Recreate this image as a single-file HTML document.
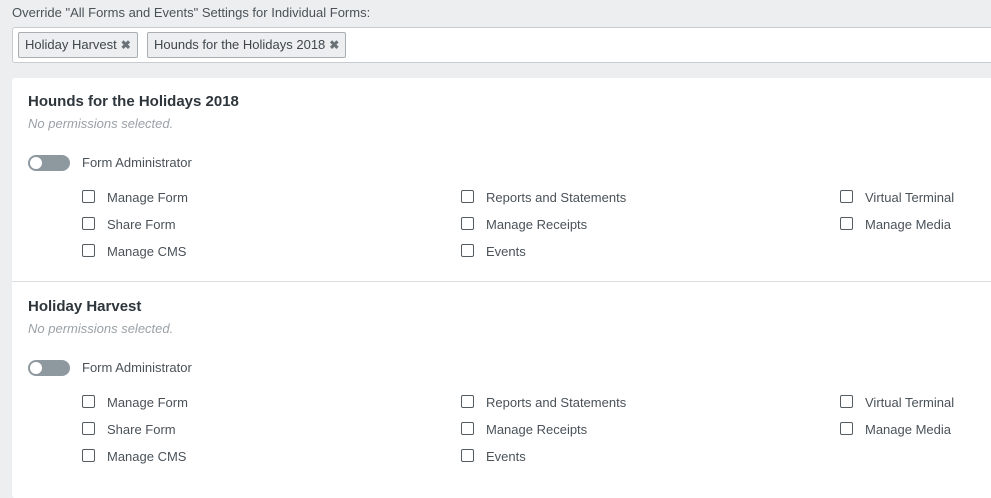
<!DOCTYPE html><html><head><style>
body{margin:0;width:991px;height:484px;background:#eceeef;font-family:"Liberation Sans",sans-serif;position:relative;overflow:hidden;color:#4a5258}
.a{position:absolute;white-space:nowrap}
.lbl{font-size:13px;color:#4a5258}
.inp{position:absolute;left:12px;top:27px;width:990px;height:34px;background:#fff;border:1px solid #c8ccd0;border-radius:3px}
.tag{position:absolute;top:4px;height:24px;line-height:24px;background:#eceeef;border:1px solid #a9aeb2;border-radius:2px;font-size:13px;padding:0 6px;color:#3f474d}
.tag b{color:#6b7378;margin-left:4px;font-size:12px}
.card{position:absolute;left:12px;top:78px;width:990px;height:420px;background:#fff;border-radius:3px}
.sep{position:absolute;left:12px;top:281px;width:990px;height:1px;background:#dcdfe1}
.h{font-size:15px;font-weight:bold;color:#2e363c}
.sub{font-size:13px;font-style:italic;color:#9aa1a6}
.tog{position:absolute;width:42px;height:16px;border-radius:8px;background:#8e989f}
.tog::after{content:"";position:absolute;left:2px;top:2px;width:12px;height:12px;border-radius:50%;background:#fff}
.cb{position:absolute;width:11px;height:11px;border:1px solid #555c61;border-radius:2px;background:#fff}
</style></head><body>
<div class="a lbl" style="left:12px;top:5px">Override "All Forms and Events" Settings for Individual Forms:</div>
<div class="inp">
<div class="tag" style="left:5px">Holiday Harvest<b>✖</b></div>
<div class="tag" style="left:134px">Hounds for the Holidays 2018<b>✖</b></div>
</div>
<div class="card"></div>
<div class="sep"></div>
<div id="s1"></div>
<script>
const titles=["Hounds for the Holidays 2018","Holiday Harvest"];
const cols=[[82,107,["Manage Form","Share Form","Manage CMS"]],[461,486,["Reports and Statements","Manage Receipts","Events"]],[840,865,["Virtual Terminal","Manage Media"]]];
let h="";
titles.forEach((t,i)=>{const o=i*205;
h+=`<div class="a h" style="left:28px;top:${93+o}px">${t}</div>`;
h+=`<div class="a sub" style="left:28px;top:116+${0}px;top:${116+o}px">No permissions selected.</div>`;
h+=`<div class="tog" style="left:28px;top:${155+o}px"></div>`;
h+=`<div class="a lbl" style="left:82px;top:${155+o}px">Form Administrator</div>`;
cols.forEach(c=>c[2].forEach((l,j)=>{const y=190+o+j*27;
h+=`<div class="cb" style="left:${c[0]}px;top:${y}px"></div><div class="a lbl" style="left:${c[1]}px;top:${y+0}px">${l}</div>`;}));
});
document.getElementById("s1").innerHTML=h;
</script>
</body></html>
